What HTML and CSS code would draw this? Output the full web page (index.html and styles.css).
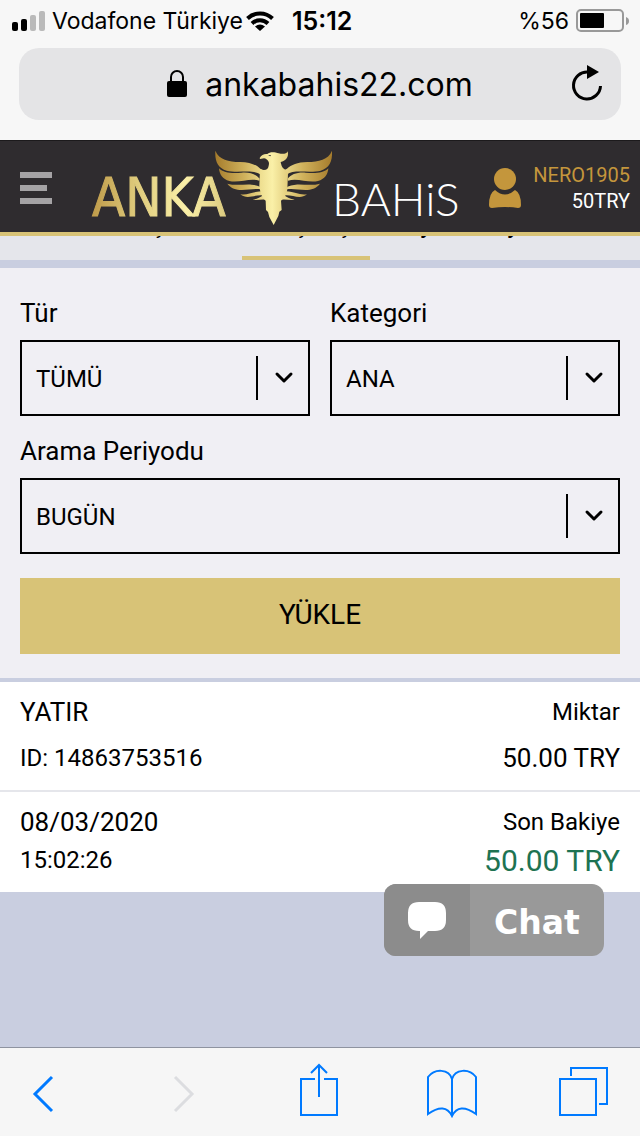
FILE: index.html
```
<!DOCTYPE html>
<html lang="tr">

<head>
    <meta charset="UTF-8">
    <meta name="viewport" content="width=device-width, initial-scale=1.0">
    <title>Anka Bahis</title>
    <link rel="stylesheet" href="styles.css">
</head>

<body>
    <div class="browser-top">
        <div class="status">
            <svg class="signal" viewBox="0 0 34 21" width="34" height="21">
                <rect x="0" y="11" width="6" height="9" rx="2" />
                <rect x="9" y="8" width="6" height="12" rx="2" />
                <rect x="18" y="4" width="6" height="16" rx="2" fill="#bababa" />
                <rect x="27" y="0" width="6" height="20" rx="2" fill="#bababa" />
            </svg>
            <span class="carrier">Vodafone Türkiye</span>
            <svg class="wifi" viewBox="0 0 28 20" width="28" height="20">
                <g fill="none" stroke="#000" stroke-width="4">
                    <path d="M1.500 7.500a18 18 0 0 1 25 0" />
                    <path d="M6 12.500a11.500 11.500 0 0 1 16 0" />
                </g>
                <path d="M9 15.500q5-4 10 0l-5 4.500z" />
            </svg>
            <span class="time">15:12</span>
            <span class="percent">%56</span>
            <svg viewBox="0 0 54 24" width="54" height="24">
                <rect x="2" y="1" width="46" height="21" rx="4" fill="none" stroke="#999" stroke-width="2" />
                <rect x="5" y="4" width="24" height="15" rx="1" />
                <path d="M51 8q3 1 3 4t-3 4z" fill="#999" />
            </svg>
        </div>
        <div class="address">
            <svg viewBox="0 0 20 28" width="20" height="28">
                <rect x="0" y="11" width="20" height="16" rx="2" />
                <path d="M4 12V7a6 6 0 0 1 12 0v5" fill="none" stroke="#000" stroke-width="2" />
            </svg>
            <span>ankabahis22.com</span>
            <button class="reload" type="button" aria-label="Yenile">
                <svg viewBox="0 0 32 36" width="32" height="36">
                    <path d="M17 7A13.500 13.500 0 1 0 29.500 21" fill="none" stroke="#000" stroke-width="3" />
                    <path d="M16 0l12 7-12 7z" />
                </svg>
            </button>
        </div>
    </div>

    <header class="site-header">
        <button class="menu" type="button" aria-label="Menü">
            <svg viewBox="0 0 32 32" width="32" height="32" fill="#a5a3a5">
                <rect y="0" width="32" height="6" />
                <rect y="13" width="27" height="6" />
                <rect y="26" width="32" height="6" />
            </svg>
        </button>
        <a class="logo" href="#" aria-label="Anka Bahis">
            <svg viewBox="0 0 368 76" width="368" height="76">
                <defs>
                    <linearGradient id="gold" x1="0" x2="1" y1="0" y2="0">
                        <stop offset="0" stop-color="#bf9b4a" />
                        <stop offset="0.350" stop-color="#e0cd7e" />
                        <stop offset="0.700" stop-color="#fbf0a8" />
                        <stop offset="1" stop-color="#dccb80" />
                    </linearGradient>
                    <linearGradient id="wing" gradientUnits="userSpaceOnUse" x1="46" x2="221" y1="0" y2="0">
                        <stop offset="0" stop-color="#a67c2c" />
                        <stop offset="0.500" stop-color="#d0b25c" />
                        <stop offset="1" stop-color="#faf0a8" />
                    </linearGradient>
                    <linearGradient id="body" x1="0" x2="1" y1="0" y2="0">
                        <stop offset="0" stop-color="#eddd8e" />
                        <stop offset="0.450" stop-color="#faf0a8" />
                        <stop offset="1" stop-color="#e2cd7c" />
                    </linearGradient>
                    <g id="feathers">
                        <path d="M46 44C58 72 85 77 120 78C150 79 168 86 181 98L205 110L182 116C160 98 115 113 80 104C55 96 44 78 46 44Z" />
                        <path d="M57 97C70 112 100 113 125 110C150 108 168 115 179 128L178 134C150 124 118 142 88 135C68 130 58 115 57 97Z" />
                        <path d="M82 143C105 150 135 144 155 146Q170 147 180 152L182 160C150 154 107 176 82 143Z" />
                        <path d="M121 175C145 178 155 168 184 166L188 178C165 175 142 192 121 175Z" />
                        <path d="M158 191C172 189 180 184 190 178L198 191C185 188 172 194 158 191Z" />
                    </g>
                </defs>
                <text class="logo-anka" x="0" y="66" fill="url(#gold)" stroke="url(#gold)">ANKA</text>
                <svg x="123" y="0" width="118" height="75" viewBox="45 42 354 225">
                    <g fill="url(#wing)">
                        <use href="#feathers" />
                        <use href="#feathers" transform="translate(442 0) scale(-1 1)" />
                    </g>
                    <path fill="url(#body)" d="M179 66C184 56 193 53 202 54C210 46 226 49 236 52C248 55 260 54 263 46C268 64 256 76 242 78C244 88 246 96 256 101L264 113L262 160C260 177 250 190 243 194L245 222L238 227L235 240L221 267L208 243L204 228L198 222L197 194C188 187 180 170 178 150L180 99C194 105 205 101 206 89C210 79 203 69 192 67L180 69Z" />
                    <path fill="#2f2c2f" d="M204 58l9-1-2 4z" />
                </svg>
                <text class="logo-bahis" x="240" y="66">BAHiS</text>
            </svg>
        </a>
        <a class="account" href="#">
            <svg viewBox="0 0 32 40" width="32" height="40" fill="#c4963c">
                <ellipse cx="16" cy="11" rx="11" ry="11" />
                <path d="M6 22q10 9 20 0q6 3 6 15q0 3-3 3q-13-2-26 0q-3 0-3-3q0-12 6-15z" />
            </svg>
            <span class="account-text">
                <span class="username">NERO1905</span>
                <span class="balance">50TRY</span>
            </span>
        </a>
    </header>

    <nav class="tabs">
        <a href="#">Para Çekim</a>
        <a class="active" href="#">Geçmiş</a>
        <a href="#">Kayıt Detayı</a>
    </nav>

    <main>
        <form class="filters">
            <div class="field">
                <label for="type">Tür</label>
                <div class="select">
                    <select id="type">
                        <option>TÜMÜ</option>
                    </select>
                    <svg viewBox="0 0 16 10" width="16" height="10">
                        <path d="M1 1l7 7 7-7" />
                    </svg>
                </div>
            </div>
            <div class="field">
                <label for="category">Kategori</label>
                <div class="select">
                    <select id="category">
                        <option>ANA</option>
                    </select>
                    <svg viewBox="0 0 16 10" width="16" height="10">
                        <path d="M1 1l7 7 7-7" />
                    </svg>
                </div>
            </div>
            <div class="field wide">
                <label for="period">Arama Periyodu</label>
                <div class="select">
                    <select id="period">
                        <option>BUGÜN</option>
                    </select>
                    <svg viewBox="0 0 16 10" width="16" height="10">
                        <path d="M1 1l7 7 7-7" />
                    </svg>
                </div>
            </div>
            <button class="load wide" type="button">YÜKLE</button>
        </form>

        <section class="result">
            <div class="result-row">
                <div class="line"><span class="big">YATIR</span><span>Miktar</span></div>
                <div class="line"><span>ID: 14863753516</span><span class="big">50.00 TRY</span></div>
            </div>
            <div class="result-row compact">
                <div class="line"><span class="big">08/03/2020</span><span>Son Bakiye</span></div>
                <div class="line"><span>15:02:26</span><span class="total">50.00 TRY</span></div>
            </div>
        </section>
    </main>

    <button class="chat" type="button">
        <span class="chat-icon">
            <svg viewBox="0 0 38 36" width="38" height="36" fill="#fff">
                <path d="M11 0h16q11 0 11 11v7q0 11-11 11h-7l-8 8v-8h-1q-11 0-11-11v-7q0-11 11-11z" />
            </svg>
        </span>
        <span class="chat-label">Chat</span>
    </button>

    <footer class="toolbar">
        <button type="button" aria-label="Geri">
            <svg viewBox="0 0 50 56" width="50" height="56">
                <path d="M34 13L17 30l17 17" stroke-width="3" />
            </svg>
        </button>
        <button type="button" aria-label="İleri" disabled>
            <svg viewBox="0 0 50 56" width="50" height="56">
                <path d="M22 13l17 17-17 17" stroke-width="3" />
            </svg>
        </button>
        <button type="button" aria-label="Paylaş">
            <svg viewBox="0 0 50 56" width="50" height="56">
                <path d="M26 15H12v36h36V15H35M30 33V1M22 9l8-8 8 8" />
            </svg>
        </button>
        <button type="button" aria-label="Yer imleri">
            <svg viewBox="0 0 50 56" width="50" height="56">
                <path d="M28 52Q21 38 4 50V13C11 4 25 5 28 15C31 5 45 4 52 13V50Q35 38 28 52ZM28 15V52" />
            </svg>
        </button>
        <button type="button" aria-label="Sekmeler">
            <svg viewBox="0 0 50 56" width="50" height="56">
                <path d="M1 15h36v36H1zM12 12V4h36v36h-8" />
            </svg>
        </button>
    </footer>
</body>

</html>
```

FILE: styles.css
```
* {
    box-sizing: border-box;
}

body {
    margin: 0;
    min-height: 100vh;
    display: flex;
    flex-direction: column;
    position: relative;
    font-family: Roboto, sans-serif;
    font-size: 24px;
    color: #000;
    background-color: #c9cee0;
}

svg {
    display: block;
    flex: none;
    overflow: visible;
}

button {
    margin: 0;
    padding: 0;
    border: none;
    background: none;
    font-family: inherit;
    color: inherit;
    cursor: pointer;
}

a {
    color: inherit;
    text-decoration: none;
}

/* browser bars */
.browser-top {
    background-color: #f7f7f7;
    padding-bottom: 20px;
    font-family: Inter, sans-serif;
}

.status {
    height: 48px;
    padding: 0 11px 6px 12px;
    display: flex;
    align-items: center;
    font-size: 23px;
}

.carrier {
    margin-left: 6px;
}

.wifi {
    margin-left: 3px;
}

.time {
    margin-left: 18px;
    font-size: 25px;
    font-weight: 600;
}

.percent {
    margin-left: auto;
    margin-right: 6px;
}

.address {
    height: 72px;
    margin: 0 19px;
    border-radius: 20px;
    background-color: #e4e4e6;
    display: flex;
    align-items: center;
    justify-content: center;
    gap: 18px;
    position: relative;
    font-size: 32px;
}

.reload {
    position: absolute;
    right: 18px;
    top: 17px;
}

/* site header */
.site-header {
    height: 96px;
    padding: 2px 10px 0 20px;
    border-top: 1px solid #1c1a1c;
    border-bottom: 4px solid #d8c377;
    background-color: #2f2c2f;
    display: flex;
    align-items: center;
}

.logo {
    margin: 0 auto 0 40px;
}

.logo-anka {
    font-family: "DejaVu Sans Condensed", "DejaVu Sans", sans-serif;
    font-size: 54px;
    stroke-width: 1px;
}

.logo-bahis {
    font-family: Lato, sans-serif;
    font-size: 46px;
    font-weight: 300;
    fill: #fff;
}

.account {
    display: flex;
    align-items: center;
    gap: 12px;
    font-size: 20px;
    line-height: 26px;
}

.account-text {
    display: flex;
    flex-direction: column;
    align-items: flex-end;
}

.username {
    color: #c4963c;
}

.balance {
    color: #fff;
}

.tabs {
    height: 24px;
    padding-left: 70px;
    overflow: hidden;
    display: flex;
    align-items: flex-end;
    background-color: #e5e6eb;
    font-size: 26px;
    line-height: 30px;
}

.tabs a {
    padding: 0 20px 17px;
    border-bottom: 4px solid transparent;
}

.tabs .active {
    border-color: #d8c377;
}

main {
    flex: 1;
    padding-top: 8px;
}

/* filters */
.filters {
    padding: 20px 20px 24px;
    display: grid;
    grid-template-columns: 1fr 1fr;
    gap: 10px 20px;
    background-color: #f0eff4;
}

.wide {
    grid-column: 1 / -1;
}

label {
    display: block;
    padding-bottom: 2px;
    font-size: 26px;
    line-height: 50px;
}

.select {
    height: 76px;
    display: grid;
    grid-template-columns: 1fr 52px;
    align-items: center;
}

.select select {
    grid-area: 1 / 1 / 2 / 3;
    width: 100%;
    height: 100%;
    padding: 2px 60px 0 14px;
    appearance: none;
    border: 2px solid #000;
    border-radius: 0;
    background: linear-gradient(#000, #000) right 50px center / 2px 44px no-repeat;
    font-family: inherit;
    font-size: 24px;
    color: #000;
}

.select svg {
    grid-area: 1 / 2;
    margin-left: 18px;
    pointer-events: none;
    fill: none;
    stroke: #000;
    stroke-width: 3;
    stroke-linecap: round;
    stroke-linejoin: round;
}

.load {
    height: 76px;
    margin-top: 14px;
    padding-bottom: 4px;
    background-color: #d8c377;
    font-size: 28px;
}

/* results */
.result {
    margin-top: 4px;
    background-color: #fff;
}

.result-row {
    padding: 12px 20px 14px;
    display: flex;
    flex-direction: column;
    gap: 10px;
}

.result-row.compact {
    gap: 2px;
    border-top: 2px solid #e5e6eb;
}

.line {
    display: flex;
    justify-content: space-between;
    line-height: 36px;
}

.big {
    font-size: 26px;
}

.total {
    font-size: 30px;
    line-height: 38px;
    margin-bottom: -2px;
    color: #1d7352;
}

.chat {
    position: absolute;
    right: 36px;
    bottom: 180px;
    width: 220px;
    height: 72px;
    display: flex;
    border-radius: 12px;
    overflow: hidden;
    background-color: #999;
    color: #fff;
    font-family: "DejaVu Sans", sans-serif;
    font-size: 33px;
    font-weight: bold;
}

.chat-icon {
    width: 86px;
    height: 100%;
    display: flex;
    align-items: center;
    justify-content: center;
    background-color: #8c8c8c;
}

.chat-label {
    flex: 1;
    align-self: center;
    padding-top: 4px;
}

.toolbar {
    height: 89px;
    padding: 0 31px 0 18px;
    border-top: 1px solid #8e93a0;
    background-color: #f6f6f6;
    display: flex;
    align-items: center;
    justify-content: space-between;
}

.toolbar svg {
    fill: none;
    stroke: #007aff;
    stroke-width: 2;
}

.toolbar button:disabled svg {
    stroke: #dcdde0;
}
```
